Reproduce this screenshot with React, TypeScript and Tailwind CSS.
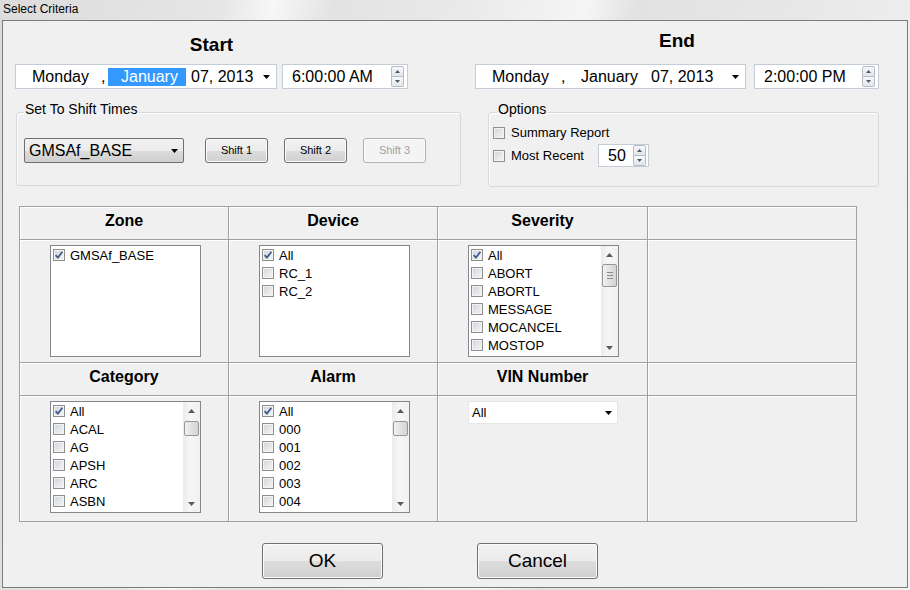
import React from "react"

function Tri({ up = false, color = "#000000", w = 7, h = 4 }: { up?: boolean; color?: string; w?: number; h?: number }) {
  return (
    <svg width={w} height={h} viewBox={`0 0 ${w} ${h}`}>
      <polygon points={up ? `0,${h} ${w},${h} ${w / 2},0` : `0,0 ${w},0 ${w / 2},${h}`} fill={color} />
    </svg>
  )
}

function CheckBox({ checked = false }: { checked?: boolean }) {
  return (
    <span className="flex h-[12px] w-[12px] shrink-0 items-center justify-center border border-[#8e8f8f] bg-[linear-gradient(135deg,#cfd3d8,#f7f7f7)] shadow-[inset_0_0_0_1px_#f3f3f3]">
      {checked && (
        <svg width="10" height="10" viewBox="0 0 10 10">
          <path d="M1.6 5.2 L3.9 7.6 L8.4 1.8" fill="none" stroke="#3f5a8f" strokeWidth="1.8" />
        </svg>
      )}
    </span>
  )
}

function Spinner() {
  return (
    <div className="flex h-[21px] w-[13px] flex-col">
      <div className="flex flex-1 items-center justify-center rounded-t-[2px] border border-[#b5bcc6] bg-[linear-gradient(#f7f8fa,#e2e6eb)]">
        <Tri up w={5} h={3} color="#4f5867" />
      </div>
      <div className="flex flex-1 items-center justify-center rounded-b-[2px] border border-t-0 border-[#b5bcc6] bg-[linear-gradient(#f7f8fa,#e2e6eb)]">
        <Tri w={5} h={3} color="#4f5867" />
      </div>
    </div>
  )
}

function DatePicker({ highlight = false, width }: { highlight?: boolean; width: string }) {
  return (
    <div className={`flex h-[25px] items-center border border-[#c4ccd8] bg-white text-[16px] text-black ${width}`}>
      <span className="w-[85px] pl-[16px]">Monday</span>
      <span className="w-[7px]">,</span>
      <span className={`flex h-[18px] w-[78px] items-center pl-[13px] ${highlight ? "bg-[#3399ff] text-white" : ""}`}>January</span>
      <span className="ml-[5px]">07, 2013</span>
      <span className="mr-[6px] ml-auto flex">
        <Tri />
      </span>
    </div>
  )
}

function TimeBox({ value, width }: { value: string; width: string }) {
  return (
    <div className={`flex h-[25px] items-center border border-[#c4ccd8] bg-white pl-[9px] pr-[3px] text-[16px] text-black ${width}`}>
      <span>{value}</span>
      <span className="ml-auto">
        <Spinner />
      </span>
    </div>
  )
}

function WinButton({ children, className = "", disabled = false }: { children: React.ReactNode; className?: string; disabled?: boolean }) {
  return (
    <div
      className={`flex items-center justify-center rounded-[3px] border ${
        disabled
          ? "border-[#adb2b5] bg-[#f4f4f4] text-[#a0a0a0]"
          : "border-[#707070] bg-[linear-gradient(#f2f2f2_0%,#ebebeb_50%,#dddddd_51%,#cfcfcf_100%)] text-black"
      } shadow-[inset_0_0_0_1px_#fbfbfb] ${className}`}
    >
      {children}
    </div>
  )
}

function ScrollBar({ thumbTop, thumbH, grip = false }: { thumbTop: string; thumbH: string; grip?: boolean }) {
  return (
    <div className="flex w-[17px] flex-col bg-[linear-gradient(90deg,#ebebeb,#f6f6f6_40%,#f1f1f1)]">
      <div className="flex h-[17px] items-center justify-center">
        <Tri up w={7} h={4} color="#5a5a5a" />
      </div>
      <div className="flex-1">
        <div className={`mx-auto flex w-[15px] flex-col items-center justify-center gap-[2px] rounded-[2px] border border-[#979797] bg-[linear-gradient(90deg,#f1f1f1,#e2e2e2_50%,#d4d4d4)] ${thumbTop} ${thumbH}`}>
          {grip && (
            <>
              <span className="h-px w-[6px] bg-[#8a8a8a]" />
              <span className="h-px w-[6px] bg-[#8a8a8a]" />
              <span className="h-px w-[6px] bg-[#8a8a8a]" />
            </>
          )}
        </div>
      </div>
      <div className="flex h-[17px] items-center justify-center">
        <Tri w={7} h={4} color="#5a5a5a" />
      </div>
    </div>
  )
}

function ListBox({ items, scroll }: { items: string[]; scroll?: { top: string; h: string; grip?: boolean } }) {
  return (
    <div className="ml-[30px] mt-[5px] flex h-[112px] w-[151px] border border-[#828790] bg-white">
      <div className="flex-1 pl-[2px]">
        {items.map((it, i) => (
          <div key={it} className="flex h-[18px] items-center gap-[5px]">
            <CheckBox checked={i === 0} />
            <span className="text-[13px] leading-none text-black">{it}</span>
          </div>
        ))}
      </div>
      {scroll && <ScrollBar thumbTop={scroll.top} thumbH={scroll.h} grip={scroll.grip} />}
    </div>
  )
}

function HeadCell({ children }: { children?: React.ReactNode }) {
  return (
    <div className="flex items-center justify-center border-b border-r border-[#a0a0a0] pb-[4px] text-[16px] font-bold text-black shadow-[inset_1px_1px_0_#ffffff]">
      {children}
    </div>
  )
}

function BodyCell({ children }: { children?: React.ReactNode }) {
  return <div className="border-b border-r border-[#a0a0a0] shadow-[inset_1px_1px_0_#ffffff]">{children}</div>
}

export default function App() {
  return (
    <div className="h-[590px] w-[910px] overflow-hidden bg-[linear-gradient(100deg,#dcdcdc_0%,#e6e6e6_22%,#f7f7f7_27%,#e3e3e3_33%,#e9e9e9_45%,#f5f5f5_58%,#e2e2e2_63%,#e8e8e8_80%,#f3f3f3_100%)] font-['Liberation_Sans',Arial,sans-serif]">
      <div className="h-[20px] pl-[3px] pt-[1px] text-[12px] leading-[16px] text-black">Select Criteria</div>

      <div className="ml-[2px] h-[568px] w-[906px] border border-[#7b7b7b] bg-[#f0f0f0]">
        {/* Start / End */}
        <div className="flex">
          <div className="ml-[12px] w-[393px] pt-[12px]">
            <div className="h-[31px] text-center text-[19px] font-bold leading-[23px] text-black">Start</div>
            <div className="flex">
              <DatePicker highlight width="w-[263px]" />
              <div className="ml-[5px]">
                <TimeBox value="6:00:00 AM" width="w-[126px]" />
              </div>
            </div>
          </div>
          <div className="ml-[67px] w-[404px] pt-[8px]">
            <div className="h-[35px] text-center text-[19px] font-bold leading-[23px] text-black">End</div>
            <div className="flex">
              <DatePicker width="w-[271px]" />
              <div className="ml-[8px]">
                <TimeBox value="2:00:00 PM" width="w-[125px]" />
              </div>
            </div>
          </div>
        </div>

        {/* Group boxes */}
        <div className="mt-[12px] flex items-start">
          <fieldset className="ml-[13px] w-[445px] rounded-[3px] border border-[#d5d9dc] shadow-[inset_1px_1px_0_#ffffff]">
            <legend className="ml-[7px] px-[1px] pb-[6px] text-[14px] leading-[16px] text-black">Set To Shift Times</legend>
            <div className="flex items-center pb-[22px] pl-[7px] pt-[15px]">
              <div className="flex h-[25px] w-[160px] items-center rounded-[2px] border border-[#707070] bg-[linear-gradient(#f2f2f2_0%,#ebebeb_50%,#dddddd_51%,#cfcfcf_100%)] pl-[4px] pr-[5px] text-[16px] text-black">
                <span>GMSAf_BASE</span>
                <span className="ml-auto flex">
                  <Tri />
                </span>
              </div>
              <WinButton className="ml-[21px] h-[25px] w-[63px] text-[11px]">Shift 1</WinButton>
              <WinButton className="ml-[16px] h-[25px] w-[63px] text-[11px]">Shift 2</WinButton>
              <WinButton disabled className="ml-[16px] h-[25px] w-[63px] text-[11px]">Shift 3</WinButton>
            </div>
          </fieldset>

          <fieldset className="ml-[27px] w-[391px] rounded-[3px] border border-[#d5d9dc] shadow-[inset_1px_1px_0_#ffffff]">
            <legend className="ml-[8px] px-[1px] pb-[6px] text-[14px] leading-[16px] text-black">Options</legend>
            <div className="pb-[19px] pl-[4px] pt-[1px] text-[13px] text-black">
              <div className="flex h-[18px] items-center gap-[6px]">
                <CheckBox />
                <span>Summary Report</span>
              </div>
              <div className="mt-[2px] flex h-[23px] items-center">
                <CheckBox />
                <span className="ml-[6px]">Most Recent</span>
                <div className="ml-[14px] flex h-[23px] w-[51px] items-center border border-[#c4ccd8] bg-white pl-[9px] pr-[2px] text-[16px]">
                  <span>50</span>
                  <span className="ml-auto">
                    <Spinner />
                  </span>
                </div>
              </div>
            </div>
          </fieldset>
        </div>

        {/* Criteria grid */}
        <div className="ml-[16px] mt-[19px] grid w-[838px] grid-cols-[209px_209px_210px_209px] grid-rows-[33px_123px_33px_126px] border-l border-t border-[#a0a0a0]">
          <HeadCell>Zone</HeadCell>
          <HeadCell>Device</HeadCell>
          <HeadCell>Severity</HeadCell>
          <HeadCell />
          <BodyCell>
            <ListBox items={["GMSAf_BASE"]} />
          </BodyCell>
          <BodyCell>
            <ListBox items={["All", "RC_1", "RC_2"]} />
          </BodyCell>
          <BodyCell>
            <ListBox items={["All", "ABORT", "ABORTL", "MESSAGE", "MOCANCEL", "MOSTOP"]} scroll={{ top: "mt-[1px]", h: "h-[23px]", grip: true }} />
          </BodyCell>
          <BodyCell />
          <HeadCell>Category</HeadCell>
          <HeadCell>Alarm</HeadCell>
          <HeadCell>VIN Number</HeadCell>
          <HeadCell />
          <BodyCell>
            <ListBox items={["All", "ACAL", "AG", "APSH", "ARC", "ASBN"]} scroll={{ top: "mt-[2px]", h: "h-[15px]" }} />
          </BodyCell>
          <BodyCell>
            <ListBox items={["All", "000", "001", "002", "003", "004"]} scroll={{ top: "mt-[2px]", h: "h-[15px]" }} />
          </BodyCell>
          <BodyCell>
            <div className="ml-[30px] mt-[5px] flex h-[23px] w-[150px] items-center border border-[#e6e6e6] bg-white pl-[3px] pr-[5px] text-[13px] text-black">
              <span>All</span>
              <span className="ml-auto flex">
                <Tri />
              </span>
            </div>
          </BodyCell>
          <BodyCell />
        </div>

        {/* Buttons */}
        <div className="mt-[21px] flex">
          <WinButton className="ml-[259px] h-[36px] w-[121px] text-[19px]">OK</WinButton>
          <WinButton className="ml-[94px] h-[36px] w-[121px] text-[19px]">Cancel</WinButton>
        </div>
      </div>
    </div>
  )
}
